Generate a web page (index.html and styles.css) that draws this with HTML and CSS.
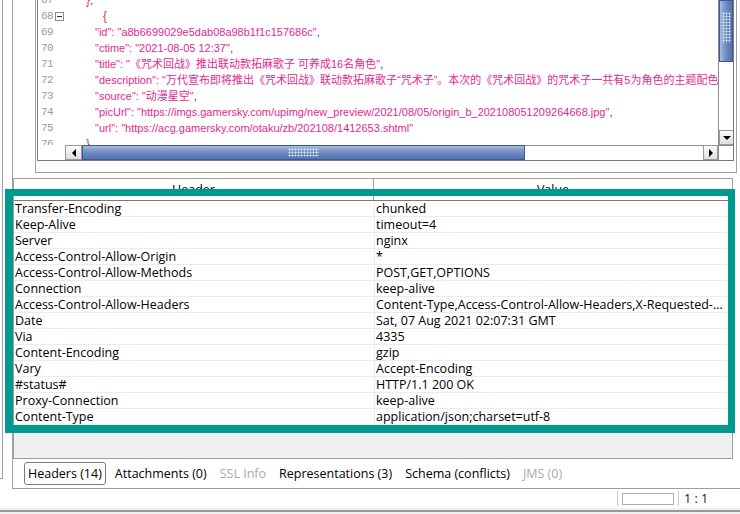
FILE: index.html
```html
<!DOCTYPE html>
<html lang="zh">
<head>
<meta charset="utf-8">
<title>Response</title>
<link rel="stylesheet" href="styles.css">
</head>
<body>
<div class="app">
  <div class="upper">
    <div class="leftpanel"></div>
    <div class="main">
      <div class="editor-panel">
        <div class="editor">
          <div class="editor-body">
            <div class="gutter">
              <div class="ln">67</div>
              <div class="ln">68<span class="fold"></span></div>
              <div class="ln">69</div>
              <div class="ln">70</div>
              <div class="ln">71</div>
              <div class="ln">72</div>
              <div class="ln">73</div>
              <div class="ln">74</div>
              <div class="ln">75</div>
              <div class="ln">76</div>
            </div>
            <div class="code">
              <div class="line ind1"><span class="br">}</span><span class="pu">,</span></div>
              <div class="line ind3"><span class="br">{</span></div>
              <div class="line ind2"><span class="s">"id": "a8b6699029e5dab08a98b1f1c157686c"</span><span class="pu">,</span></div>
              <div class="line ind2"><span class="s">"ctime": "2021-08-05 12:37"</span><span class="pu">,</span></div>
              <div class="line ind2"><span class="s">"title": "《咒术回战》推出联动款拓麻歌子 可养成16名角色"</span><span class="pu">,</span></div>
              <div class="line ind2"><span class="s">"description": "万代宣布即将推出《咒术回战》联动款拓麻歌子“咒术子”。本次的《咒术回战》的咒术子一共有5为角色的主题配色，分别是虎杖悠仁、伏黑惠、钉崎野蔷薇、五条悟和两面宿傩。"</span><span class="pu">,</span></div>
              <div class="line ind2"><span class="s">"source": "动漫星空"</span><span class="pu">,</span></div>
              <div class="line ind2"><span class="s">"picUrl": "https://imgs.gamersky.com/upimg/new_preview/2021/08/05/origin_b_202108051209264668.jpg"</span><span class="pu">,</span></div>
              <div class="line ind2"><span class="s">"url": "https://acg.gamersky.com/otaku/zb/202108/1412653.shtml"</span></div>
              <div class="line ind1"><span class="br">}</span></div>
            </div>
            <div class="vscroll">
              <div class="vthumb"><div class="grip vgrip"></div></div>
              <div class="vtrack"></div>
              <div class="sbtn down"><span class="tri tri-down"></span></div>
            </div>
          </div>
          <div class="hscroll-row">
            <div class="hcorner-left"></div>
            <div class="sbtn left"><span class="tri tri-left"></span></div>
            <div class="hthumb"><div class="grip hgrip"></div></div>
            <div class="htrack"></div>
            <div class="sbtn right"><span class="tri tri-right"></span></div>
            <div class="hcorner"></div>
          </div>
        </div>
      </div>

      <div class="table-pane">
        <div class="thead">
          <div class="th c1">Header</div>
          <div class="th c2">Value</div>
        </div>
        <div class="tbody">
          <div class="tr"><div class="td c1">Transfer-Encoding</div><div class="td c2">chunked</div></div>
          <div class="tr"><div class="td c1">Keep-Alive</div><div class="td c2">timeout=4</div></div>
          <div class="tr"><div class="td c1">Server</div><div class="td c2">nginx</div></div>
          <div class="tr"><div class="td c1">Access-Control-Allow-Origin</div><div class="td c2">*</div></div>
          <div class="tr"><div class="td c1">Access-Control-Allow-Methods</div><div class="td c2">POST,GET,OPTIONS</div></div>
          <div class="tr"><div class="td c1">Connection</div><div class="td c2">keep-alive</div></div>
          <div class="tr"><div class="td c1">Access-Control-Allow-Headers</div><div class="td c2">Content-Type,Access-Control-Allow-Headers,X-Requested-...</div></div>
          <div class="tr"><div class="td c1">Date</div><div class="td c2">Sat, 07 Aug 2021 02:07:31 GMT</div></div>
          <div class="tr"><div class="td c1">Via</div><div class="td c2">4335</div></div>
          <div class="tr"><div class="td c1">Content-Encoding</div><div class="td c2">gzip</div></div>
          <div class="tr"><div class="td c1">Vary</div><div class="td c2">Accept-Encoding</div></div>
          <div class="tr"><div class="td c1">#status#</div><div class="td c2">HTTP/1.1 200 OK</div></div>
          <div class="tr"><div class="td c1">Proxy-Connection</div><div class="td c2">keep-alive</div></div>
          <div class="tr"><div class="td c1">Content-Type</div><div class="td c2">application/json;charset=utf-8</div></div>
        </div>
      </div>

      <div class="tabs">
        <div class="tab active">Headers (14)</div>
        <div class="tab">Attachments (0)</div>
        <div class="tab disabled">SSL Info</div>
        <div class="tab">Representations (3)</div>
        <div class="tab">Schema (conflicts)</div>
        <div class="tab disabled">JMS (0)</div>
      </div>
    </div>
  </div>

  <div class="statusbar">
    <div class="sep"></div>
    <div class="progress"></div>
    <div class="sep"></div>
    <div class="pos">1 : 1</div>
  </div>
  <div class="bottom-edge"></div>

  <div class="highlight"></div>
</div>
</body>
</html>
```

FILE: styles.css
```css
* { box-sizing: border-box; }
html, body { margin: 0; padding: 0; }
body {
  background: #ffffff;
  font-family: "Open Sans", "Noto Sans", "Noto Sans CJK SC", sans-serif;
  font-size: 12px;
  color: #000;
  overflow: hidden;
}
.app {
  position: relative;
  width: 740px;
  height: 514px;
  display: flex;
  flex-direction: column;
}
.upper {
  display: flex;
  height: 489px;
}
.leftpanel {
  width: 3px;
  height: 479px;
  border-right: 1px solid #a0a0a0;
  border-bottom: 1px solid #a0a0a0;
}
.main {
  margin-left: 9px;
  width: 728px;
  border-left: 1px solid #a0a0a0;
  display: flex;
  flex-direction: column;
}

/* ---------- editor ---------- */
.editor-panel {
  margin-left: 22px;
  width: 702px;
  height: 173px;
  border: 1px solid #a0a0a0;
  border-top: none;
  padding: 0 2px 0 1px;
}
.editor {
  width: 697px;
  height: 161px;
  border: 1px solid #7a7a7a;
  border-top: none;
  display: flex;
  flex-direction: column;
  background: #fff;
}
.editor-body {
  display: flex;
  height: 145px;
  overflow: hidden;
}
.gutter {
  width: 27px;
  flex: none;
  margin-top: -8px;
  font-family: "Liberation Mono", monospace;
  font-size: 11px;
  color: #9a9a9a;
}
.ln {
  position: relative;
  height: 16px;
  line-height: 16px;
  padding-left: 3px;
  letter-spacing: -0.6px;
}
.fold {
  position: absolute;
  left: 17px;
  top: 4px;
  width: 9px;
  height: 9px;
  border: 1px solid #8c8c8c;
  background: #fff;
}
.fold::after {
  content: "";
  position: absolute;
  left: 1px;
  top: 3px;
  width: 5px;
  height: 1px;
  background: #333;
}
.code {
  width: 653px;
  flex: none;
  margin-top: -8px;
  font-family: "Liberation Sans", "Noto Sans CJK SC", sans-serif;
  font-size: 11px;
  white-space: nowrap;
  overflow: hidden;
}
.line {
  height: 16px;
  line-height: 16px;
}
.ind1 { padding-left: 21px; }
.ind2 { padding-left: 30px; }
.ind3 { padding-left: 38px; }
.s { color: #e3298f; }
.br { color: #e5344f; font-size: 12px; }
.pu { color: #3c3c3c; }

.vscroll {
  width: 15px;
  flex: none;
  display: flex;
  flex-direction: column;
  border-left: 1px solid #8e8e8e;
}
.vthumb {
  height: 62px;
  border: 1px solid #3b5a97;
  background: linear-gradient(to right, #a9bde2 0%, #7d98c9 35%, #6683bb 65%, #5574ad 100%);
  display: flex;
  justify-content: center;
  padding-top: 11px;
}
.vtrack { flex: 1; background: #fff; }

.grip {
  background-image: radial-gradient(circle, #dde7fa 0.9px, transparent 1.1px);
  background-size: 3px 3px;
}
.vgrip { width: 9px; height: 31px; }
.hgrip { width: 31px; height: 9px; }

.sbtn {
  width: 15px;
  height: 15px;
  flex: none;
  background: linear-gradient(#fbfbfb, #dedede);
  border: 1px solid #9a9a9a;
  display: flex;
  align-items: center;
  justify-content: center;
}
.tri { width: 0; height: 0; display: block; }
.tri-down { border-left: 4px solid transparent; border-right: 4px solid transparent; border-top: 4px solid #000; }
.tri-left { border-top: 4px solid transparent; border-bottom: 4px solid transparent; border-right: 4px solid #000; }
.tri-right { border-top: 4px solid transparent; border-bottom: 4px solid transparent; border-left: 4px solid #000; }

.hscroll-row {
  display: flex;
  height: 15px;
}
.hcorner-left { width: 27px; flex: none; background: #fff; }
.sbtn.left { width: 17px; }
.hthumb {
  width: 443px;
  flex: none;
  height: 15px;
  border: 1px solid #3b5a97;
  background: linear-gradient(to bottom, #a9bde2 0%, #7d98c9 35%, #6683bb 65%, #5574ad 100%);
  padding-left: 205px;
  padding-top: 2px;
}
.htrack {
  width: 178px;
  flex: none;
  border-top: 1px solid #8e8e8e;
  background: #fff;
}
.hcorner { width: 15px; flex: none; background: #fff; border-left: 1px solid #8e8e8e; border-top: 1px solid #8e8e8e; }

/* ---------- table ---------- */
.table-pane {
  margin-top: 5px;
  width: 720px;
  height: 281px;
  border: 1px solid #a0a0a0;
  background: #f0f0f0;
  display: flex;
  flex-direction: column;
  font-size: 12.5px;
}
.thead {
  display: flex;
  height: 22px;
  background: #fff;
  border-bottom: 1px solid #7a7a7a;
}
.th {
  line-height: 21px;
  text-align: center;
  color: #000;
}
.th.c1 { width: 360px; border-right: 1px solid #a0a0a0; }
.th.c2 { flex: 1; }
.tbody { background: #fff; }
.tr {
  display: flex;
  height: 16px;
  border-bottom: 1px solid #ececec;
}
.td {
  line-height: 15px;
  white-space: nowrap;
  overflow: hidden;
}
.td.c1 { width: 361px; padding-left: 1px; border-right: 1px solid #ececec; }
.td.c2 { flex: 1; padding-left: 1px; }

/* ---------- tabs ---------- */
.tabs {
  height: 30px;
  display: flex;
  align-items: center;
  gap: 5px;
  padding-left: 11px;
  border-bottom: 1px solid #a0a0a0;
  background: #fff;
}
.tab {
  height: 23px;
  line-height: 21px;
  padding: 0 3px;
  border: 1px solid transparent;
  border-radius: 3px;
  font-size: 12.5px;
  white-space: nowrap;
}
.tab.active { border-color: #7a7a7a; padding: 0 3px 0 3px; }
.tab.disabled { color: #aaaaaa; }

/* ---------- status ---------- */
.statusbar {
  height: 19px;
  display: flex;
  align-items: center;
  padding-left: 617px;
  background: #fff;
}
.sep { width: 1px; height: 15px; background: #c8c8c8; }
.progress {
  width: 52px;
  height: 12px;
  margin: 0 4px 0 4px;
  border: 1px solid #b0b0b0;
}
.pos {
  margin-left: 5px;
  font-size: 12.5px;
  color: #1a1a1a;
  line-height: 19px;
}
.bottom-edge {
  flex: 1;
  background: linear-gradient(#f0f0f0 0 2px, #9a9a9a 2px 4px, #f0f0f0 4px);
}

/* ---------- annotation overlay ---------- */
.highlight {
  position: absolute;
  left: 5px;
  top: 189px;
  width: 730px;
  height: 244px;
  border-style: solid;
  border-color: #00998f;
  border-width: 7px 7px 8px 8px;
  pointer-events: none;
}
```
